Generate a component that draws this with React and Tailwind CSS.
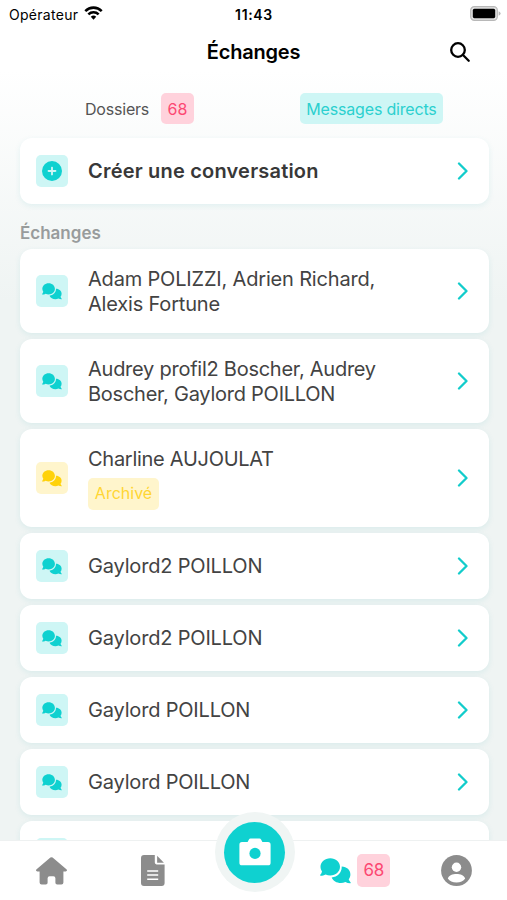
import { FaCirclePlus } from 'react-icons/fa6';

const conversations = [
  { id: 1, lines: ['Adam POLIZZI, Adrien Richard,', 'Alexis Fortune'] },
  { id: 2, lines: ['Audrey profil2 Boscher, Audrey', 'Boscher, Gaylord POILLON'], tracking: 'tracking-[-0.25px]' },
  { id: 3, lines: ['Charline AUJOULAT'], archived: true, tracking: 'tracking-[-0.28px]' },
  { id: 4, lines: ['Gaylord2 POILLON'] },
  { id: 5, lines: ['Gaylord2 POILLON'] },
  { id: 6, lines: ['Gaylord POILLON'] },
  { id: 7, lines: ['Gaylord POILLON'] },
  { id: 8, lines: [] }
];

function Chevron() {
  return (
    <svg viewBox="0 0 12 18" className="mr-[20px] h-[18px] w-3 shrink-0" fill="none">
      <path d="M2 1.5 9.5 9 2 16.5" stroke="#12cccb" strokeWidth="2.3" strokeLinecap="round" strokeLinejoin="round" />
    </svg>
  );
}

function ChatIcon({ className }) {
  return (
    <svg viewBox="0 0 31 26" className={className} fill="currentColor">
      <path d="M10.3.2c5.5 0 9.7 3.8 9.7 8.6s-4.2 8.7-9.7 8.7c-1.7 0-3.3-.4-4.7-1.1-1.5.9-3.200 1.400-4.900 1.400-.6 0-.8-.6-.4-1 .9-1 1.500-2.100 1.700-3.300C1 12.100.5 10.500.5 8.800.5 4 4.800.2 10.300.2Z" />
      <path d="M21.700 8.600c5.100.1 8.700 3.500 8.700 7.900 0 1.800-.6 3.400-1.700 4.700.3 1.100.9 2.100 1.800 3 .4.500.2 1-.4 1-1.700 0-3.300-.4-4.700-1.200-1.400.6-2.900.9-4.500.9-4.300 0-7.900-2.200-9.200-5.500 5.700-.4 10-4.800 10-10.200Z" />
    </svg>
  );
}

function HouseIcon() {
  return (
    <svg viewBox="0 0 31 28" className="mx-auto h-[28px] w-[31px]" fill="currentColor">
      <path d="M14.4.6a1.7 1.7 0 0 1 2.2 0l13.8 11.6c1.1 1 .5 2.2-.8 2.2h-2.2v11.2a2 2 0 0 1-2 2h-4.2a1.8 1.8 0 0 1-1.8-1.8v-4.6a2 2 0 0 0-2-2h-3.8a2 2 0 0 0-2 2v4.6a1.8 1.8 0 0 1-1.8 1.8H5.6a2 2 0 0 1-2-2V14.4H1.4c-1.3 0-1.9-1.2-.8-2.2Z" />
    </svg>
  );
}

function DocumentIcon() {
  return (
    <svg viewBox="0 0 24 31" className="mx-auto h-[31px] w-6" fill="currentColor">
      <path d="M3 0h10.8v7.6a1.8 1.8 0 0 0 1.8 1.8H23.6V28a3 3 0 0 1-3 3H3a3 3 0 0 1-3-3V3a3 3 0 0 1 3-3Z" />
      <path d="m16.1.8 6.8 7H16.1Z" />
      <path d="M6.2 15.9h11M6.2 20h11M6.2 24.2h11" stroke="#fff" strokeWidth="1.5" />
    </svg>
  );
}

function CameraIcon() {
  return (
    <svg viewBox="0 0 32 28" className="h-7 w-8">
      <path
        d="M3 4.1h5.6l1.2-2.400A2 2 0 0 1 11.600.6h8.800a2 2 0 0 1 1.800 1.100l1.200 2.400H29a2.600 2.600 0 0 1 2.600 2.600v18a2.600 2.600 0 0 1-2.600 2.600H3a2.600 2.600 0 0 1-2.600-2.600v-18A2.600 2.600 0 0 1 3 4.100Z"
        fill="#fff"
      />
      <circle cx="16" cy="15.4" r="5.6" fill="#0fd1d0" />
    </svg>
  );
}

function UserIcon() {
  return (
    <svg viewBox="0 0 31 31" className="mx-auto h-[31px] w-[31px]">
      <circle cx="15.5" cy="15.5" r="15.4" fill="currentColor" />
      <circle cx="15.5" cy="12.3" r="4.7" fill="#fff" />
      <path d="M6.8 23.4c1-3.2 4.8-4.5 8.7-4.5s7.7 1.3 8.7 4.5c-1.7 2.5-4.9 4-8.7 4s-7-1.5-8.7-4Z" fill="#fff" />
    </svg>
  );
}

function Card({ icon, archived, className, children }) {
  return (
    <div
      className={`flex shrink-0 items-center rounded-xl bg-white pl-4 shadow-[0_2px_6px_rgba(0,160,165,0.09)] ${className}`}
    >
      <div
        className={`flex h-8 w-8 shrink-0 items-center justify-center rounded-[5px] ${
          archived ? 'bg-[#fff5cc] text-[#ffd20a]' : 'bg-[#cef6f5] text-[#0fd1d0]'
        }`}
      >
        {icon}
      </div>
      <div className="ml-5 flex-1 text-[20px] leading-[25px] text-[#434343]">{children}</div>
      <Chevron />
    </div>
  );
}

function StatusBar() {
  return (
    <div className="flex h-7 items-center pl-[9px] pr-[6px] text-black">
      <div className="flex flex-1 items-center gap-[6px] text-[14px] tracking-[0.28px]">
        Opérateur
        <svg viewBox="0 0 20 15" className="mb-[3px] h-[14px] w-[19px]" fill="none" stroke="currentColor" strokeWidth="2.7">
          <path d="M1.2 5.4a12.4 12.4 0 0 1 17.6 0" />
          <path d="M4.5 8.9a7.8 7.8 0 0 1 11 0" />
          <path d="M10 14.6 7.1 11.6a4.2 4.2 0 0 1 5.8 0Z" fill="currentColor" stroke="none" />
        </svg>
      </div>
      <span className="-ml-[2px] text-[14px] font-semibold tracking-[0.65px]">11:43</span>
      <div className="flex flex-1 justify-end">
        <svg viewBox="0 0 31 15" className="mb-[2px] h-[15px] w-[31px]">
          <rect x="0.7" y="0.7" width="26.6" height="13.6" rx="3.6" fill="#e2e2e2" stroke="#b8b8b8" strokeWidth="1.2" />
          <rect x="2.8" y="2.8" width="22.4" height="9.4" rx="1.6" />
          <path d="M28.6 5.2q2 .7 2 2.3t-2 2.3Z" fill="#b8b8b8" />
        </svg>
      </div>
    </div>
  );
}

function TabBar() {
  return (
    <nav className="relative grid h-[60px] shrink-0 grid-cols-5 items-center border-t border-[#eef1f1] bg-white pl-px text-[#8c8c8c]">
      <HouseIcon />
      <DocumentIcon />
      <button
        className="absolute left-1/2 top-[-29px] ml-px flex h-20 w-20 -translate-x-1/2 items-center justify-center rounded-full bg-[#f0f5f4]"
        aria-label="Photo"
      >
        <span className="flex h-[61px] w-[61px] items-center justify-center rounded-full bg-[#0fd1d0]">
          <CameraIcon />
        </span>
      </button>
      <div className="col-start-4 flex items-center justify-center gap-[6px] text-[#0fd1d0]">
        <ChatIcon className="h-[26px] w-[31px]" />
        <span className="flex h-[33px] w-[33px] items-center justify-center rounded-[5px] bg-[#ffd2dc] text-[17px] tracking-[-0.3px] text-[#fc4872]">
          68
        </span>
      </div>
      <UserIcon />
    </nav>
  );
}

export default function App() {
  return (
    <div className="flex h-[900px] w-full flex-col overflow-hidden bg-[linear-gradient(to_bottom,#ffffff_70px,#eff4f3_300px)] font-['Inter','Liberation_Sans',sans-serif]">
      <StatusBar />
      <header className="grid h-12 shrink-0 grid-cols-[1fr_auto_1fr] items-center text-black">
        <h1 className="col-start-2 text-[20px] font-semibold tracking-[-0.2px]">Échanges</h1>
        <svg
          viewBox="0 0 20 20"
          className="mr-[37px] h-5 w-5 justify-self-end"
          fill="none"
          stroke="currentColor"
          strokeWidth="2.3"
          strokeLinecap="round"
        >
          <circle cx="8" cy="8" r="6.8" />
          <path d="m13 13 5.7 5.7" />
        </svg>
      </header>

      <div className="mt-[17px] flex h-[31px] shrink-0 items-center pl-[85px] text-[16px] text-[#545454]">
        <span className="w-[76px] tracking-[-0.2px]">Dossiers</span>
        <span className="flex h-[31px] w-[33px] items-center justify-center rounded-[5px] bg-[#ffd2dc] text-[#fc4872]">
          68
        </span>
        <span className="ml-[106px] flex h-[31px] w-[143px] items-center justify-center rounded-[5px] bg-[#cef6f5] tracking-[-0.18px] text-[#2bd0cf]">
          Messages directs
        </span>
      </div>

      <main className="flex min-h-0 flex-1 flex-col overflow-hidden pl-5 pr-[18px] pt-[14px]">
        <Card className="h-[66px]" icon={<FaCirclePlus className="h-5 w-5" />}>
          <span className="font-semibold tracking-[0.2px] text-[#383838]">Créer une conversation</span>
        </Card>
        <h2 className="mt-[17px] h-[28px] shrink-0 text-[17px] font-semibold leading-[24px] text-[#989c9c]">Échanges</h2>
        <div className="flex flex-col gap-[6px]">
          {conversations.map(({ id, lines, archived, tracking }) => (
            <Card
              key={id}
              archived={archived}
              icon={<ChatIcon className="h-[17px] w-5" />}
              className={archived ? 'h-[98px]' : lines.length > 1 ? 'h-[84px]' : 'h-[66px]'}
            >
              <div className={archived ? '' : 'pt-px'}>
                {lines.map((line) => (
                  <div key={line} className={`whitespace-nowrap ${tracking ?? 'tracking-[-0.18px]'}`}>
                    {line}
                  </div>
                ))}
              </div>
              {archived && (
                <span className="mt-[6px] flex h-8 w-[71px] items-center justify-center rounded-[5px] bg-[#fff5cc] text-[16px] text-[#ffd633]">
                  Archivé
                </span>
              )}
            </Card>
          ))}
        </div>
      </main>
      <TabBar />
    </div>
  );
}
